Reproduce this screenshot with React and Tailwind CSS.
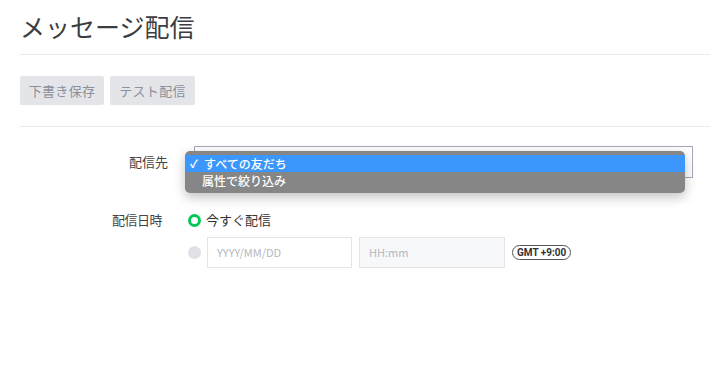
import React from 'react';

const font = { fontFamily: '"Noto Sans CJK JP", "Noto Sans", sans-serif' };

function App() {
  return (
    <div className="w-[710px] h-[366px] bg-white overflow-hidden text-[#333]" style={font}>
      <div className="pl-5">
        <div className="h-[55px] flex items-center border-b border-[#e8e9eb]">
          <h1 className="text-[25px] leading-none text-[#3a3d42] pb-[1px]">メッセージ配信</h1>
        </div>

        <div className="flex gap-[6px] py-[21px] border-b border-[#e8e9eb]">
          <button className="h-[29px] w-[84px] bg-[#e3e5e9] text-[13px] text-[#8b9099] rounded-[2px] tracking-[0.3px]">下書き保存</button>
          <button className="h-[29px] w-[85px] bg-[#e3e5e9] text-[13px] text-[#8b9099] rounded-[2px] tracking-[0.3px]">テスト配信</button>
        </div>

        <div className="pt-[19px]">
          <div className="flex items-center h-[32px]">
            <div className="w-[148px] text-right text-[13px] text-[#444]">配信先</div>
            <div className="relative ml-[26px] w-[499px] h-[32px] border border-[#a4a8bb] bg-white">
              <div className="absolute left-[-10px] top-[4px] w-[500px] h-[42px] rounded-[5px] bg-[#868686] shadow-[0_4px_12px_rgba(0,0,0,0.25)] py-[4px] text-[12px] font-medium text-white leading-none">
                <div className="h-[17px] bg-[#3b97fb] flex items-center pl-[5px]">
                  <span className="w-[14px] text-[11px] font-bold">✓</span>
                  <span>すべての友だち</span>
                </div>
                <div className="h-[17px] flex items-center pl-[17px]">属性で絞り込み</div>
              </div>
            </div>
          </div>

          <div className="flex items-center h-[20px] mt-[32px]">
            <div className="w-[142px] text-right text-[13px] text-[#444] tracking-[-0.5px]">配信日時</div>
            <div className="ml-[26px] flex items-center">
              <span className="w-[13px] h-[13px] rounded-full border-[3.5px] border-[#06c755] bg-white"></span>
              <span className="ml-[5px] text-[13px] text-[#333]">今すぐ配信</span>
            </div>
          </div>

          <div className="flex items-center mt-[7px] pl-[168px]">
            <span className="w-[13px] h-[13px] rounded-full bg-[#dfe1e6]"></span>
            <div className="ml-[6px] w-[145px] h-[31px] border border-[#e3e5e9] bg-white flex items-center px-[9px] text-[11px] text-[#b3b7be]">YYYY/MM/DD</div>
            <div className="ml-[7px] w-[146px] h-[31px] border border-[#e3e5e9] bg-[#f7f8fa] flex items-center px-[9px] text-[11px] text-[#b3b7be]">HH:mm</div>
            <span className="ml-[7px] h-[15px] px-[4px] rounded-full border border-[#555] text-[10px] font-bold leading-none flex items-center text-[#333]" style={{ fontFamily: 'Roboto, "Noto Sans", sans-serif' }}>GMT +9:00</span>
          </div>
        </div>
      </div>
    </div>
  );
}

export default App;
